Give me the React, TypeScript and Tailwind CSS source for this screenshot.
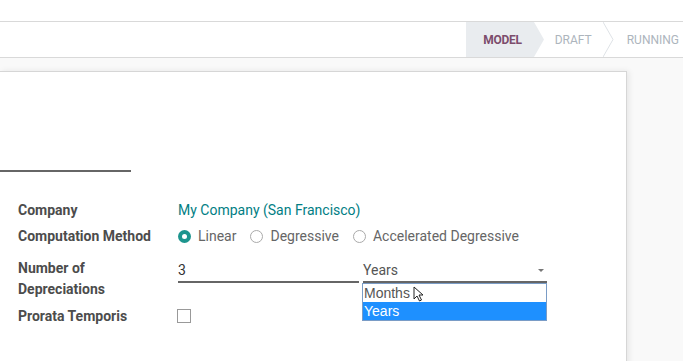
import React from "react";

function Radio({ checked, label }: { checked?: boolean; label: string }) {
  return (
    <div className="flex items-center gap-[7px]">
      {checked ? (
        <span className="w-[13px] h-[13px] rounded-full bg-[#1d958e] flex items-center justify-center">
          <span className="w-[5px] h-[5px] rounded-full bg-white" />
        </span>
      ) : (
        <span className="w-[13px] h-[13px] rounded-full border border-[#aaa] bg-white" />
      )}
      <span className="text-[14px] text-[#666]">{label}</span>
    </div>
  );
}

export default function App() {
  return (
    <div
      className="w-[683px] h-[361px] overflow-hidden bg-[#f9f9f9] relative"
      style={{ fontFamily: "Roboto, 'Noto Sans', sans-serif" }}
    >
      <div className="h-[22px] bg-white border-b border-[#d9d9d9]" />
      <div className="h-[36px] bg-white border-b border-[#d9d9d9] flex justify-end">
        <div className="flex h-full">
          <div className="relative h-full flex items-center pl-[17px] pr-[12px] bg-[#e9ecef] text-[12px] font-bold text-[#7c4d6c] tracking-tight">
            MODEL
            <svg className="absolute left-full top-0" width="10" height="35" viewBox="0 0 10 35">
              <polygon points="0,0 0,35 10,17.5" fill="#e9ecef" />
            </svg>
          </div>
          <div className="relative h-full flex items-center pl-[21px] pr-[11px] text-[12px] text-[#adb5bd]">
            DRAFT
            <svg className="absolute left-full top-0" width="11" height="35" viewBox="0 0 11 35">
              <polyline points="0,0 10,17.5 0,35" fill="white" stroke="#dee2e6" strokeWidth="1" />
            </svg>
          </div>
          <div className="h-full flex items-center pl-[24px] pr-[4px] text-[12px] text-[#adb5bd]">
            RUNNING
          </div>
        </div>
      </div>
      <div className="pt-[13px]">
        <div className="w-[627px] h-[300px] bg-white border-t border-r border-[#d6d6d6] shadow-[2px_0_6px_rgba(0,0,0,0.08)] pt-[98px]">
          <div className="w-[131px] h-[2px] bg-[#666]" />
          <div className="pl-[18px] pt-[28px] text-[14px]">
            <div className="flex items-center h-[20px]">
              <div className="w-[160px] font-bold text-[#4c4c4c]">Company</div>
              <div className="text-[14px] text-[#017e84]">My Company (San Francisco)</div>
            </div>
            <div className="flex items-center h-[20px] mt-[6px]">
              <div className="w-[160px] font-bold text-[#4c4c4c]">Computation Method</div>
              <div className="flex items-center gap-[14px]">
                <Radio checked label="Linear" />
                <Radio label="Degressive" />
                <Radio label="Accelerated Degressive" />
              </div>
            </div>
            <div className="flex mt-[12px]">
              <div className="w-[160px] font-bold text-[#4c4c4c] leading-[21px]">
                Number of
                <br />
                Depreciations
              </div>
              <div className="flex items-start">
                <div className="w-[181px] h-[25px] border-b-2 border-[#666] text-[14px] text-[#333] flex items-center pt-[2px]">
                  3
                </div>
                <div className="relative ml-[4px] w-[184px]">
                  <div className="h-[25px] border-b-2 border-[#666] text-[14px] text-[#555] flex items-center justify-between pt-[2px]">
                    <span>Years</span>
                    <svg width="8" height="5" viewBox="0 0 8 5" className="mr-[2px]">
                      <polygon points="1,1 7,1 4,4" fill="#777" />
                    </svg>
                  </div>
                  <div
                    className="absolute left-[-1px] top-[25px] w-[185px] border border-[#7a9cc6] bg-white text-[14px] z-10"
                    style={{ fontFamily: "'Liberation Sans', Arial, sans-serif" }}
                  >
                    <div className="h-[18px] flex items-center pl-[1px] text-[#555]">
                      Months
                      <svg width="12" height="16" viewBox="0 0 12 16" className="ml-[3px] mt-[2px]">
                        <path d="M1 1 L1 13 L4 10 L6.5 15 L8.5 14 L6 9 L10 9 Z" fill="white" stroke="#222" strokeWidth="1" strokeLinejoin="round" />
                      </svg>
                    </div>
                    <div className="h-[18px] flex items-center pl-[1px] bg-[#1e90ff] text-white">Years</div>
                  </div>
                </div>
              </div>
            </div>
            <div className="flex items-center h-[20px] mt-[6px]">
              <div className="w-[159px] font-bold text-[#4c4c4c]">Prorata Temporis</div>
              <span className="w-[14px] h-[14px] border border-[#999] bg-white" />
            </div>
          </div>
        </div>
      </div>
    </div>
  );
}
